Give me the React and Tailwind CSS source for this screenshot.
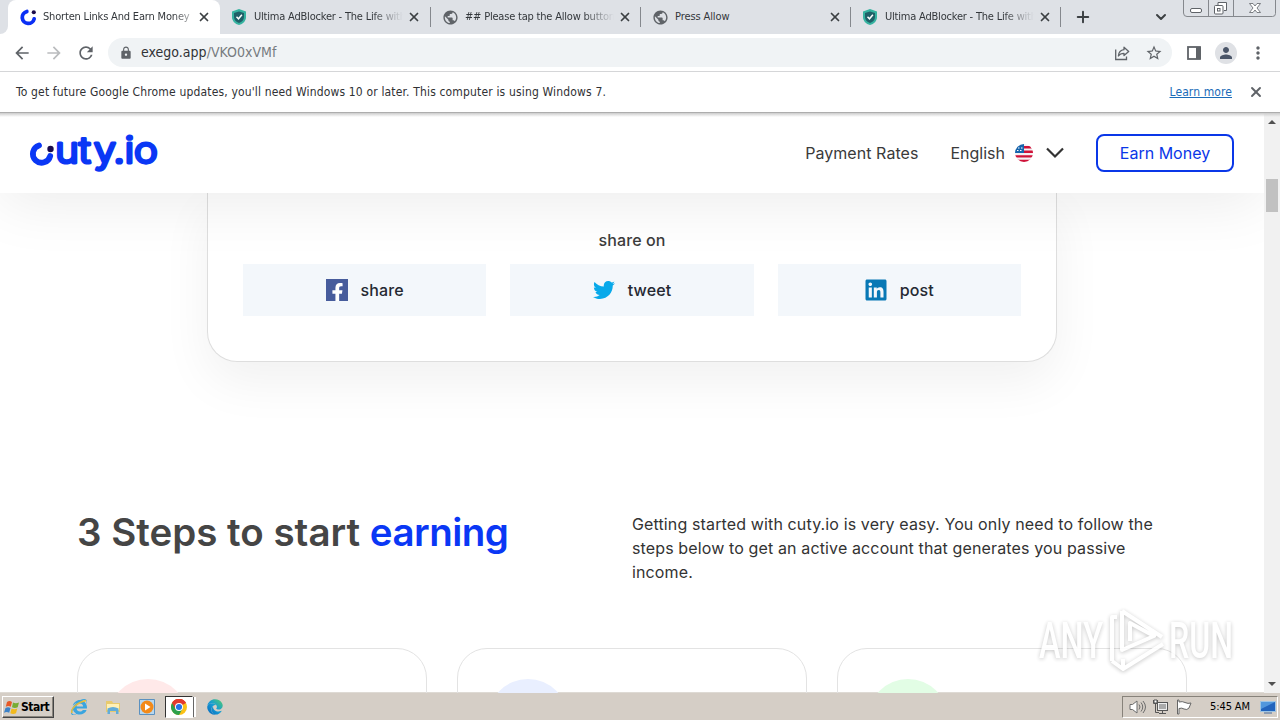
import React from "react";
import {
  MdArrowBack, MdArrowForward, MdRefresh, MdLock, MdPublic, MdStarBorder,
  MdPerson, MdMoreVert,
} from "react-icons/md";
import { X, Plus, ChevronDown } from "lucide-react";
import { FaTwitter, FaLinkedin, FaFacebookF, FaEdge, FaInternetExplorer } from "react-icons/fa";

const UI = "font-['DejaVu_Sans_Condensed','DejaVu_Sans',sans-serif] [font-stretch:condensed]";

function CutyMark({ className }) {
  return (
    <svg className={className} viewBox="0 0 18 18" fill="none">
      <path d="M7.2 2.700A6.400 6.400 0 1 0 15 10.400" stroke="#0b2ff5" strokeWidth="4" strokeLinecap="round" />
      <circle cx="14.600" cy="3.400" r="2.200" fill="#1b0b4b" />
    </svg>
  );
}

function Shield() {
  return (
    <svg className="h-4 w-[14px] shrink-0" viewBox="0 0 14 16">
      <path d="M7 0 14 2.500V8c0 4-3 7-7 8C3 15 0 12 0 8V2.500Z" fill="#35b3a0" />
      <path d="M7 2.400 12 4v4c0 3-2 5-5 6-3-1-5-3-5-6V4Z" fill="#1f6068" />
      <path d="m4.500 7.800 2 2 3.400-4" stroke="#fff" strokeWidth="1.500" fill="none" />
    </svg>
  );
}

function Tab({ icon, title, width, fade }) {
  return (
    <div className={`flex h-[34px] shrink-0 items-center pl-[11px] ${width}`}>
      <span className="flex w-4 shrink-0 justify-center">{icon}</span>
      <span
        className={`ml-[7px] w-[150px] shrink-0 overflow-hidden whitespace-nowrap text-[11px] text-[#33373b] ${
          fade ? "tracking-[-0.2px] [mask-image:linear-gradient(to_right,#000_118px,transparent_149px)]" : "tracking-[-0.1px]"
        }`}
      >
        {title}
      </span>
      <X strokeWidth={3} className="ml-[3px] size-[14px] shrink-0 text-[#3c4043]" />
      <span className="ml-auto h-5 w-px bg-[#85888d]" />
    </div>
  );
}

function TabStrip() {
  const globe = <MdPublic className="size-[17px] shrink-0 text-[#5f6368]" />;
  return (
    <div className="flex h-[34px] bg-[#dee1e6]">
      <div className="w-2 bg-white"><div className="h-full rounded-br-lg bg-[#dee1e6]" /></div>
      <div className="flex w-[212px] shrink-0 items-center rounded-t-lg bg-white pl-3">
        <CutyMark className="size-[17px] shrink-0" />
        <span className="ml-[6px] w-[150px] shrink-0 overflow-hidden whitespace-nowrap text-[11px] tracking-[-0.18px] text-[#33373b] [mask-image:linear-gradient(to_right,#000_130px,transparent_158px)]">
          Shorten Links And Earn Money
        </span>
        <X strokeWidth={3} className="ml-[4px] size-[14px] text-[#3c4043]" />
      </div>
      <Tab icon={<Shield />} title="Ultima AdBlocker - The Life with" width="w-[211px]" fade />
      <Tab icon={globe} title="## Please tap the Allow button" width="w-[210px]" fade />
      <Tab icon={globe} title="Press Allow" width="w-[210px]" />
      <Tab icon={<Shield />} title="Ultima AdBlocker - The Life with" width="w-[210px]" fade />
      <Plus strokeWidth={2.6} className="mt-[8px] ml-[13px] size-[18px] shrink-0 text-[#3c4043]" />
      <ChevronDown strokeWidth={3} className="mt-[9px] ml-[61px] size-4 shrink-0 text-[#3c4043]" />
      <svg className="ml-[14px] h-[18px] w-[94px] shrink-0" viewBox="0 0 94 18" fill="none" stroke="#85888d">
        <path d="M.5 0v13q0 3.500 3.500 3.500h85.500q3 0 3-3V0M25.500 0v16.500M50.500 0v16.500" />
        <rect x="7.500" y="8.500" width="11" height="4" rx="1.500" fill="#fff" stroke="#5f6368" />
        <path d="M35 5V2.500h8.500v8H41" stroke="#5f6368" fill="#fff" />
        <rect x="31.500" y="5.500" width="8.500" height="8.500" rx="1" fill="#fff" stroke="#5f6368" />
        <rect x="34.500" y="8.500" width="2.500" height="2.500" stroke="#5f6368" />
        <path d="M66.500 3.500h3.500l2 2.500 2-2.500h3.500l-3.500 4.500 3.500 4.500h-3.500l-2-2.500-2 2.500h-3.500l3.500-4.500Z" fill="#fff" stroke="#5f6368" strokeWidth=".8" />
      </svg>
    </div>
  );
}

function Toolbar() {
  return (
    <div className="flex h-[38px] items-center border-b border-[#d5d6d8] bg-white pl-3">
      <MdArrowBack className="size-5 shrink-0 text-[#5f6368]" />
      <MdArrowForward className="ml-3 size-5 shrink-0 text-[#babcbe]" />
      <MdRefresh className="ml-3 size-5 shrink-0 text-[#5f6368]" />
      <div className="ml-3 flex h-[29px] w-[1064px] shrink-0 items-center rounded-full bg-[#f0f3f5] pl-[11px] text-[#5f6368]">
        <MdLock className="size-[14px]" />
        <span className="ml-[8px] text-[14px] tracking-[0.02px] text-[#303236]">
          exego.app<span className="text-[#777b80]">/VKO0xVMf</span>
        </span>
        <svg className="ml-auto h-4 w-4" viewBox="0 0 16 16" fill="none" stroke="#5f6368" strokeWidth="1.300">
          <path d="M1.700 4.500v10h10.800v-3" />
          <path d="M10 2.200 14.700 6.500 10 10.600V8.300C7.400 8.300 5.700 9 4.400 11c.3-3.500 2.400-6 5.600-6.300Z" strokeLinejoin="round" />
        </svg>
        <MdStarBorder className="mr-[9px] ml-[15px] size-[18px]" />
      </div>
      <svg className="ml-[15px] size-[14px] shrink-0" viewBox="0 0 14 14">
        <rect x="1" y="1" width="12" height="12" fill="none" stroke="#5f6368" strokeWidth="1.800" />
        <rect x="9" y="1" width="5" height="12" fill="#5f6368" />
      </svg>
      <span className="ml-[14px] flex size-[22px] shrink-0 items-center justify-center rounded-full bg-[#dfe1e5]">
        <MdPerson className="size-[18px] text-[#4a5568]" />
      </span>
      <MdMoreVert className="ml-[11px] size-5 shrink-0 text-[#5f6368]" />
    </div>
  );
}

function InfoBar() {
  return (
    <div className="flex h-10 items-center bg-white pl-4 text-[12px] text-[#303134]">
      <span className="whitespace-nowrap tracking-[0.16px]">
        To get future Google Chrome updates, you'll need Windows 10 or later. This computer is using Windows 7.
      </span>
      <span className="ml-auto tracking-[0.1px] text-[#1a6bb8] underline">Learn more</span>
      <X strokeWidth={2.8} className="mr-4 ml-4 size-4 text-[#5f6368]" />
    </div>
  );
}

function CutyLogo() {
  return (
    <svg className="h-[44px] w-[132px] overflow-visible" viewBox="29 130 132 44">
      <path d="M39 144.500A8.800 8.800 0 1 0 50.200 155" fill="none" stroke="#0a37f5" strokeWidth="5.800" strokeLinecap="round" />
      <circle cx="50.500" cy="148" r="3.200" fill="#1b0b4b" />
      <text
        x="49 69.800 83 100.500 110.300 118.700"
        y="162"
        transform="scale(1.13 1)"
        className="fill-[#0a37f5] stroke-[#0a37f5] stroke-[3] font-['Inter',sans-serif] text-[35.5px] leading-none font-light [stroke-linecap:round] [stroke-linejoin:round]"
      >
        uty.io
      </text>
    </svg>
  );
}

function Flag() {
  return (
    <svg className="size-[18px]" viewBox="0 0 18 18">
      <clipPath id="flag"><circle cx="9" cy="9" r="9" /></clipPath>
      <g clipPath="url(#flag)">
        <path d="M0 0h18v18H0Z" fill="#f5f1f3" />
        <path d="M8 2h10v2.400H8ZM8 6.600h10V9H8ZM0 11.200h18v2.400H0ZM0 15.700h18V18H0Z" fill="#cf1238" />
        <path d="M0 0h9v9H0Z" fill="#1765ad" />
        <path d="M3 4h1.500M6 4h1.500M2 6.500h1.500M5 6.500h1.500" stroke="#fff" />
      </g>
    </svg>
  );
}

function SiteHeader() {
  return (
    <header className="relative z-10 flex h-20 shrink-0 items-center bg-white pr-[30px] pl-[29px] text-[16px] text-[#3a3a3a] shadow-[0_10px_60px_rgba(0,0,0,0.08)]">
      <CutyLogo />
      <span className="ml-auto tracking-[0.06px]">Payment Rates</span>
      <span className="ml-8">English</span>
      <span className="ml-[10px]"><Flag /></span>
      <svg className="ml-[13px] h-3 w-[18px]" viewBox="0 0 18 12" fill="none" stroke="#333" strokeWidth="2.200">
        <path d="m1 1.500 8 8 8-8" />
      </svg>
      <button className="ml-8 h-[38px] w-[138px] rounded-lg border-2 border-[#0a37e8] text-[#0a37e8]">
        Earn Money
      </button>
    </header>
  );
}

function Share({ icon, label }) {
  return (
    <div className="flex h-[52px] items-center justify-center gap-[13px] bg-[#f3f7fb] text-[#252932]">
      {icon}
      <span>{label}</span>
    </div>
  );
}

function ShareCard() {
  return (
    <section className="mx-auto flex h-[169px] w-[850px] shrink-0 flex-col rounded-b-[30px] border border-t-0 border-[#dedede] bg-white px-[35px] text-[16px] font-medium tracking-[0.1px] text-[#3c3c3c] shadow-[0_20px_50px_rgba(0,0,0,0.06)]">
      <div className="mt-[35px] text-center leading-6">share on</div>
      <div className="mt-3 grid grid-cols-3 gap-6">
        <Share
          label="share"
          icon={
            <span className="flex size-[22px] items-end justify-end overflow-hidden bg-[#475c9c]">
              <FaFacebookF className="mr-px -mb-px size-[19px] text-white" />
            </span>
          }
        />
        <Share label="tweet" icon={<FaTwitter className="size-[22px] text-[#08a9ea]" />} />
        <Share
          label="post"
          icon={
            <span className="flex size-[22px] items-center justify-center">
              <FaLinkedin className="size-[24px] shrink-0 text-[#0878b5]" />
            </span>
          }
        />
      </div>
    </section>
  );
}

function StepCard({ dot }) {
  return (
    <div className="h-[200px] rounded-[30px] border border-[#e3e3e3] p-[30px]">
      <div className={`size-20 rounded-full ${dot}`} />
    </div>
  );
}

function Steps() {
  return (
    <section className="mt-[146px] shrink-0 pr-[77px] pl-[77px]">
      <div className="flex">
        <h2 className="w-[555px] shrink-0 text-[38.5px] leading-[48px] font-semibold whitespace-nowrap text-[#454545]">
          3 Steps to start <span className="tracking-[-0.5px] text-[#0a37f5]">earning</span>
        </h2>
        <p className="mt-1 w-[540px] text-[16px] leading-6 tracking-[0.13px] text-[#333]">
          Getting started with cuty.io is very easy. You only need to follow the<br />
          steps below to get an active account that generates you passive<br />
          income.
        </p>
      </div>
      <div className="mt-[64px] grid grid-cols-3 gap-[30px]">
        <StepCard dot="bg-[#ffe9e9]" />
        <StepCard dot="bg-[#e9efff]" />
        <StepCard dot="bg-[#e2fde5]" />
      </div>
    </section>
  );
}

function Scrollbar() {
  return (
    <div className="flex w-4 shrink-0 flex-col items-center bg-[#f1f1f1]">
      <span className="mt-[7px] border-x-4 border-b-4 border-x-transparent border-b-[#505050]" />
      <span className="mt-[55px] h-[33px] w-3 bg-[#c1c1c1]" />
      <span className="mt-auto mb-[7px] border-x-4 border-t-4 border-x-transparent border-t-[#505050]" />
    </div>
  );
}

function Watermark() {
  return (
    <svg className="absolute top-[600px] left-[1030px] z-20 h-20 w-[212px] overflow-visible opacity-90 drop-shadow-[0_1px_2px_rgba(0,0,0,0.25)]" viewBox="1030 600 212 80">
      <g className="fill-white font-['Roboto',sans-serif] text-[50px] leading-none font-medium">
        <text x="1039" y="658" textLength="64" lengthAdjust="spacingAndGlyphs">ANY</text>
        <text x="1169" y="658" textLength="64" lengthAdjust="spacingAndGlyphs">RUN</text>
      </g>
      <g fill="none" stroke="#fff" strokeWidth="4" strokeLinejoin="round">
        <path d="M1117 617h-5v44M1122 611l40 26M1122 611v39l32-14-24-13v18M1123 669l40-25M1112 661l11 8v-10" />
      </g>
    </svg>
  );
}

function ChromeLogo() {
  return (
    <svg className="size-4" viewBox="0 0 24 24">
      <circle cx="12" cy="12" r="12" fill="#fbc116" />
      <path d="M12 12 1.600 6A12 12 0 0 1 22.400 6Z" fill="#e33b2e" />
      <path d="M12 12 1.600 6A12 12 0 0 0 12 24l5.200-9Z" fill="#2da14c" />
      <path d="M12 6h10.400A12 12 0 0 0 1.600 6l5.200 9Z" fill="#e33b2e" />
      <circle cx="12" cy="12" r="6" fill="#fff" />
      <circle cx="12" cy="12" r="4.600" fill="#2673e8" />
    </svg>
  );
}

function Taskbar() {
  return (
    <footer className={`${UI} flex h-[27px] shrink-0 items-center bg-[#d5cec6] pt-px shadow-[0_-1px_#dedad4] text-[11px] text-black`}>
      <div className="ml-[2px] flex h-[22px] w-[52px] items-center border border-t-white border-r-[#444] border-b-[#444] border-l-white pl-px text-[12px] font-bold shadow-[inset_-1px_-1px_#8a857d]">
        <svg className="mr-px h-[15px] w-4 shrink-0" viewBox="0 0 16 14">
          <path d="M3 1.500q2.500-2 5 0L6.800 6.300q-2.500-1.600-5 0Z" fill="#e75927" />
          <path d="M9 2q2.700 1.500 6 0l-1.300 4.700q-2.700 1.500-5.700 0Z" fill="#78ac32" />
          <path d="M1.500 7.500q2.500-1.700 5 0l-1.300 4.800q-2.500-1.600-5.200 0Z" fill="#3c82c8" />
          <path d="M7.600 8q2.800 1.500 5.700 0L12 12.800q-2.700 1.500-5.700 0Z" fill="#f2b91c" />
        </svg>
        <span className="tracking-[-0.5px]">Start</span>
      </div>
      <span className="relative ml-[17px]">
        <FaInternetExplorer className="size-4 text-[#3aa5df]" />
        <svg className="absolute top-0 left-0 size-4" viewBox="0 0 16 16" fill="none">
          <path d="M1 14C-1 10 7 3 15 1.500" stroke="#e9bd35" strokeWidth="1.400" />
        </svg>
      </span>
      <svg className="ml-[18px] h-[15px] w-4" viewBox="0 0 16 15">
        <path d="M1 1h6l1 2h7v9H1Z" fill="#e8ca6d" />
        <path d="M2 4h12v6H2Z" fill="#fff0b5" />
        <path d="M2.500 14V8.500Q8 5.500 13.500 8.500V14H11v-3H5v3Z" fill="#62acd8" />
      </svg>
      <svg className="ml-[18px] size-4" viewBox="0 0 16 16">
        <path d="M.5.500h15v15H.5Z" fill="#b7d7ef" stroke="#5b91c0" />
        <circle cx="8" cy="8" r="6.500" fill="#f38a19" />
        <path d="m6 4.500 5.500 3.500L6 11.500Z" fill="#fff" />
      </svg>
      <div className="ml-[10px] flex h-[22px] w-[28px] items-center justify-center border border-t-[#333] border-r-white border-b-white border-l-[#333] bg-white">
        <ChromeLogo />
      </div>
      <span className="h-5 w-px bg-[#666]" />
      <span className="h-5 w-[2px] bg-white" />
      <svg className="size-0">
        <linearGradient id="edge" x1="0" y1="1" x2="1" y2="0">
          <stop offset="0" stopColor="#0866bc" />
          <stop offset=".5" stopColor="#159cd5" />
          <stop offset="1" stopColor="#55cd69" />
        </linearGradient>
      </svg>
      <FaEdge className="ml-[11px] size-4 fill-[url(#edge)]" />
      <div className="mr-[2px] ml-auto flex h-[22px] w-[156px] items-center border border-t-[#87827a] border-r-white border-b-white border-l-[#87827a] pl-[6px]">
        <svg className="h-4 w-[17px]" viewBox="0 0 17 16" fill="none" stroke="#6c6c6c">
          <path d="M1 5.500h2.500L8 2v12l-4.500-3.500H1Z" fill="#fff" />
          <path d="M10 5.500q2 2.500 0 5M12 3.500q3.500 4.500 0 9M14 2q5 6 0 12" />
        </svg>
        <svg className="ml-[6px] size-4" viewBox="0 0 16 16" fill="none" stroke="#555">
          <rect x="5.500" y="3.500" width="10" height="8" fill="#aaa" />
          <rect x="6.500" y="4.500" width="8" height="6" stroke="#fff" strokeWidth=".8" />
          <path d="M7 14.500h7M10.500 12v2M1.500 1v3.500h4V1M3.500 5v8.500H7" />
          <path d="M2 1h3v3H2Z" fill="#fff" />
        </svg>
        <svg className="ml-[8px] size-4" viewBox="0 0 16 16" fill="#fff" stroke="#666">
          <path d="M1.500 1v14h1.500V9.500q3-1 5 .5 3 1.500 5-1l2-5q-3 1-6-.5-2.500-1.500-6-.5V1Z" />
        </svg>
        <span className="ml-[18px] whitespace-nowrap tracking-[-0.1px]">5:45 AM</span>
        <svg className="mr-px ml-auto h-[14px] w-4" viewBox="0 0 16 14">
          <path d="M.5 1.500h15v10H.5Z" fill="#2264bd" stroke="#9dc5e5" />
          <path d="M1 2h14L1 9Z" fill="#5197dd" />
          <path d="M4 13h8" stroke="#426b9e" />
        </svg>
      </div>
    </footer>
  );
}

export default function App() {
  return (
    <div className="relative flex h-[720px] w-[1280px] flex-col overflow-hidden bg-white">
      <div className={`${UI} shrink-0`}>
        <TabStrip />
        <Toolbar />
        <InfoBar />
      </div>
      <div className="relative flex h-[581px] shrink-0 border-t border-[#adadad] font-['Inter',sans-serif]">
        <main className="flex w-[1264px] flex-col overflow-hidden">
          <SiteHeader />
          <ShareCard />
          <Steps />
        </main>
        <Scrollbar />
        <div className="absolute top-0 left-0 z-20 h-1 w-full bg-linear-to-b from-[#ccc] to-transparent" />
      </div>
      <Taskbar />
      <Watermark />
    </div>
  );
}
